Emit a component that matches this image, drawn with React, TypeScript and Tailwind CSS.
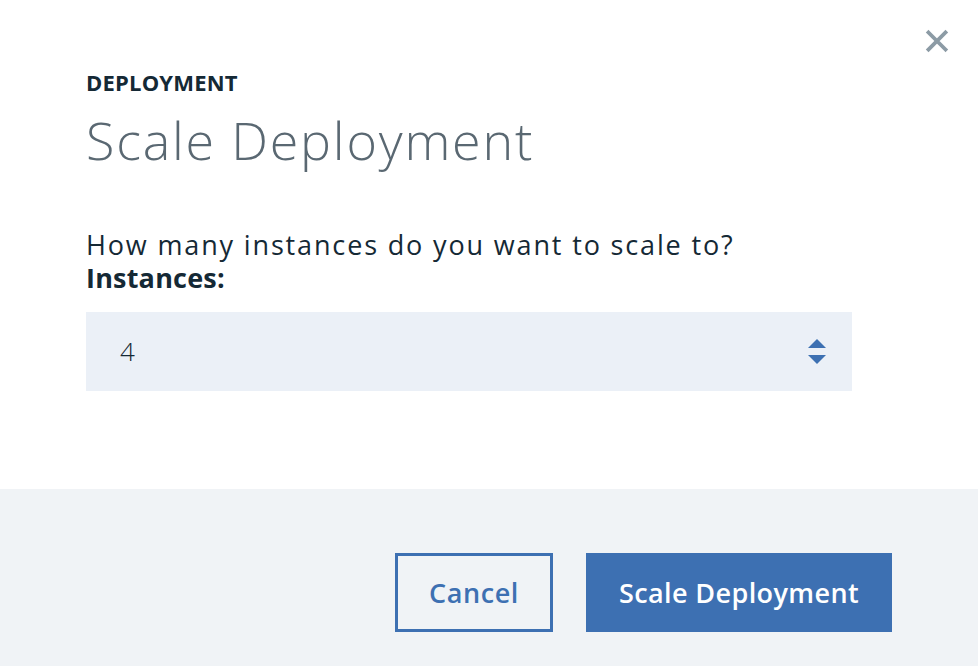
import React, { useState } from 'react';

export default function App() {
  const [count, setCount] = useState(4);

  return (
    <div className="w-[978px] h-[666px] bg-white flex flex-col text-[#152935]" style={{ fontFamily: '"Open Sans", "Noto Sans", sans-serif' }}>
      {/* Body */}
      <div className="relative flex-1 pl-[86px] pr-[126px] pt-[68px]">
        <button className="absolute top-[29px] right-[29px] w-[24px] h-[24px] flex items-center justify-center text-[#8c9ba5]">
          <svg viewBox="0 0 24 24" className="w-[24px] h-[24px]" fill="none" stroke="currentColor" strokeWidth={3.8} strokeLinecap="square">
            <path d="M3.5 3.5l17 17M20.5 3.5l-17 17" />
          </svg>
        </button>

        <div className="text-[22px] font-bold tracking-[0.2px] leading-[28px]">DEPLOYMENT</div>
        <h2 className="mt-[12px] text-[52px] font-light tracking-[1.8px] leading-[64px] text-[#5a6872]">Scale Deployment</h2>

        <p className="mt-[56px] text-[27px] tracking-[1.85px] leading-[34px]">How many instances do you want to scale to?</p>
        <label className="block text-[27px] font-bold tracking-[0.2px] leading-[32px]">Instances:</label>

        <div className="mt-[18px] h-[79px] bg-[#ebf0f7] flex items-center pl-[34px] pr-[26px]">
          <span className="flex-1 text-[26px] font-light">{count}</span>
          <div className="flex flex-col gap-[7px]">
            <button onClick={() => setCount(count + 1)} className="w-0 h-0 border-l-[9px] border-r-[9px] border-b-[9px] border-l-transparent border-r-transparent border-b-[#3d70b2]" />
            <button onClick={() => setCount(Math.max(0, count - 1))} className="w-0 h-0 border-l-[9px] border-r-[9px] border-t-[9px] border-l-transparent border-r-transparent border-t-[#3d70b2]" />
          </div>
        </div>
      </div>

      {/* Footer */}
      <div className="h-[177px] bg-[#f0f3f6] flex justify-end items-start pt-[64px] pr-[86px] gap-[33px]">
        <button className="w-[158px] h-[79px] border-[3px] border-[#3d70b2] text-[#3d70b2] text-[27px] font-semibold tracking-[0.6px] leading-none">Cancel</button>
        <button className="w-[306px] h-[79px] bg-[#3d70b2] text-white text-[27px] font-semibold tracking-[0.4px] leading-none">Scale Deployment</button>
      </div>
    </div>
  );
}
